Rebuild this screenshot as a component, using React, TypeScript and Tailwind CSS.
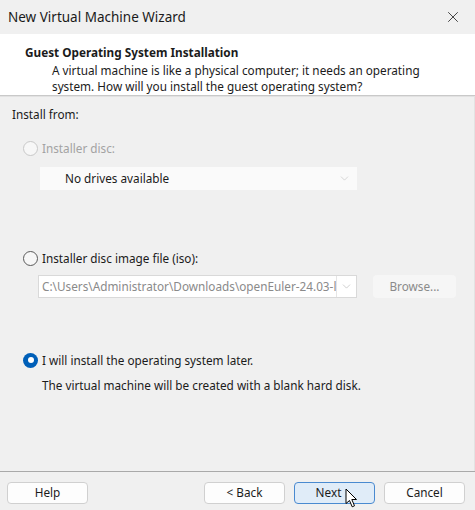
import { ChevronDown, X } from 'lucide-react';

const font = { fontFamily: '"Noto Sans", "Open Sans", sans-serif' };

function Radio({ checked, disabled }: { checked?: boolean; disabled?: boolean }) {
  if (checked) {
    return (
      <span className="flex h-[15px] w-[15px] shrink-0 items-center justify-center rounded-full bg-[#005fb8]">
        <span className="h-[6px] w-[6px] rounded-full bg-white" />
      </span>
    );
  }
  return (
    <span
      className={[
        'h-[15px] w-[15px] shrink-0 rounded-full border bg-[#f7f7f7]',
        disabled ? 'border-[#c8c8c8]' : 'border-[#5a5a5a]',
      ].join(' ')}
    />
  );
}

function DialogButton({ label, focused }: { label: string; focused?: boolean }) {
  return (
    <button
      type="button"
      className={[
        'relative flex h-[22px] w-[81px] items-center justify-center rounded-[4px] border text-[11.75px] text-[#1b1b1b]',
        focused ? 'border-[#4a8ad0] bg-[#e0ecf8] pr-[12px]' : 'border-[#d0d0d0] bg-[#fdfdfd]',
      ].join(' ')}
    >
      {label}
    </button>
  );
}

// plain arrow pointer resting on the Next button
function Pointer() {
  return (
    <svg className="absolute left-[345px] top-[488px]" width="13" height="20" viewBox="0 0 13 20">
      <path
        d="M1 1 L1 15.5 L4.5 12.5 L7.2 18.8 L9.5 17.8 L6.8 11.5 L11.5 11.5 Z"
        fill="white"
        stroke="black"
        strokeWidth="1"
        strokeLinejoin="round"
      />
    </svg>
  );
}

export default function App() {
  return (
    <div className="relative flex h-[510px] w-[475px] flex-col bg-[#f0f0f0] text-[#1b1b1b]" style={font}>
      <div className="flex h-[34px] shrink-0 items-center justify-between pl-[8px] pr-[13px]">
        <span className="text-[13.5px]">New Virtual Machine Wizard</span>
        <X size={18} strokeWidth={1.1} className="text-[#222]" />
      </div>

      <div className="flex h-[62px] shrink-0 flex-col border-b border-[#c9c9c9] bg-white pl-[25px] pt-[8px] shadow-[0_1px_0_#e2e2e2]">
        <p className="text-[11.75px] font-bold leading-[20px]">Guest Operating System Installation</p>
        <p className="pl-[27px] text-[11.75px] leading-[16px]">
          A virtual machine is like a physical computer; it needs an operating
          <br />
          system. How will you install the guest operating system?
        </p>
      </div>

      <div className="flex flex-1 flex-col border-r border-[#e3e3e3] pl-[12px] pt-[10px] text-[11.75px]">
        <p className="leading-[16px]">Install from:</p>

        <label className="mt-[17px] flex items-center gap-[4px] pl-[11px] text-[#a3a3a3]">
          <Radio disabled />
          <span className="leading-[18px]">Installer disc:</span>
        </label>
        <div className="ml-[28px] mt-[10px] flex h-[23px] w-[317px] items-center justify-between bg-[#fafafa] pl-[25px] pr-[6px]">
          <span>No drives available</span>
          <ChevronDown size={13} strokeWidth={1} className="text-[#b8b8b8]" />
        </div>

        <label className="mt-[59px] flex items-center gap-[4px] pl-[11px]">
          <Radio />
          <span className="leading-[18px]">Installer disc image file (iso):</span>
        </label>
        <div className="mt-[8px] flex items-center">
          <div className="ml-[26px] flex h-[23px] w-[319px] items-center border border-[#d9d9d9] bg-white">
            <span className="flex-1 overflow-hidden whitespace-nowrap pl-[3px] text-[#8a8a8a]">
              C:\Users\Administrator\Downloads\openEuler-24.03-l
            </span>
            <span className="flex h-full w-[20px] items-center justify-center border-l border-[#e5e5e5]">
              <ChevronDown size={13} strokeWidth={1} className="text-[#a8a8a8]" />
            </span>
          </div>
          <div className="ml-[16px] flex h-[23px] w-[83px] items-center justify-center rounded-[4px] bg-[#f6f6f6] text-[#8a8a8a]">
            Browse...
          </div>
        </div>

        <label className="mt-[53px] flex items-center gap-[4px] pl-[11px]">
          <Radio checked />
          <span className="leading-[18px]">I will install the operating system later.</span>
        </label>
        <p className="mt-[7px] pl-[30px] leading-[18px]">
          The virtual machine will be created with a blank hard disk.
        </p>
      </div>

      <div className="flex h-[39px] shrink-0 items-start border-t border-[#a9a9a9] pt-[10px]">
        <div className="ml-[7px]">
          <DialogButton label="Help" />
        </div>
        <div className="ml-[116px] flex gap-[9px]">
          <DialogButton label="< Back" />
          <DialogButton label="Next" focused />
          <DialogButton label="Cancel" />
        </div>
      </div>

      <Pointer />
    </div>
  );
}
